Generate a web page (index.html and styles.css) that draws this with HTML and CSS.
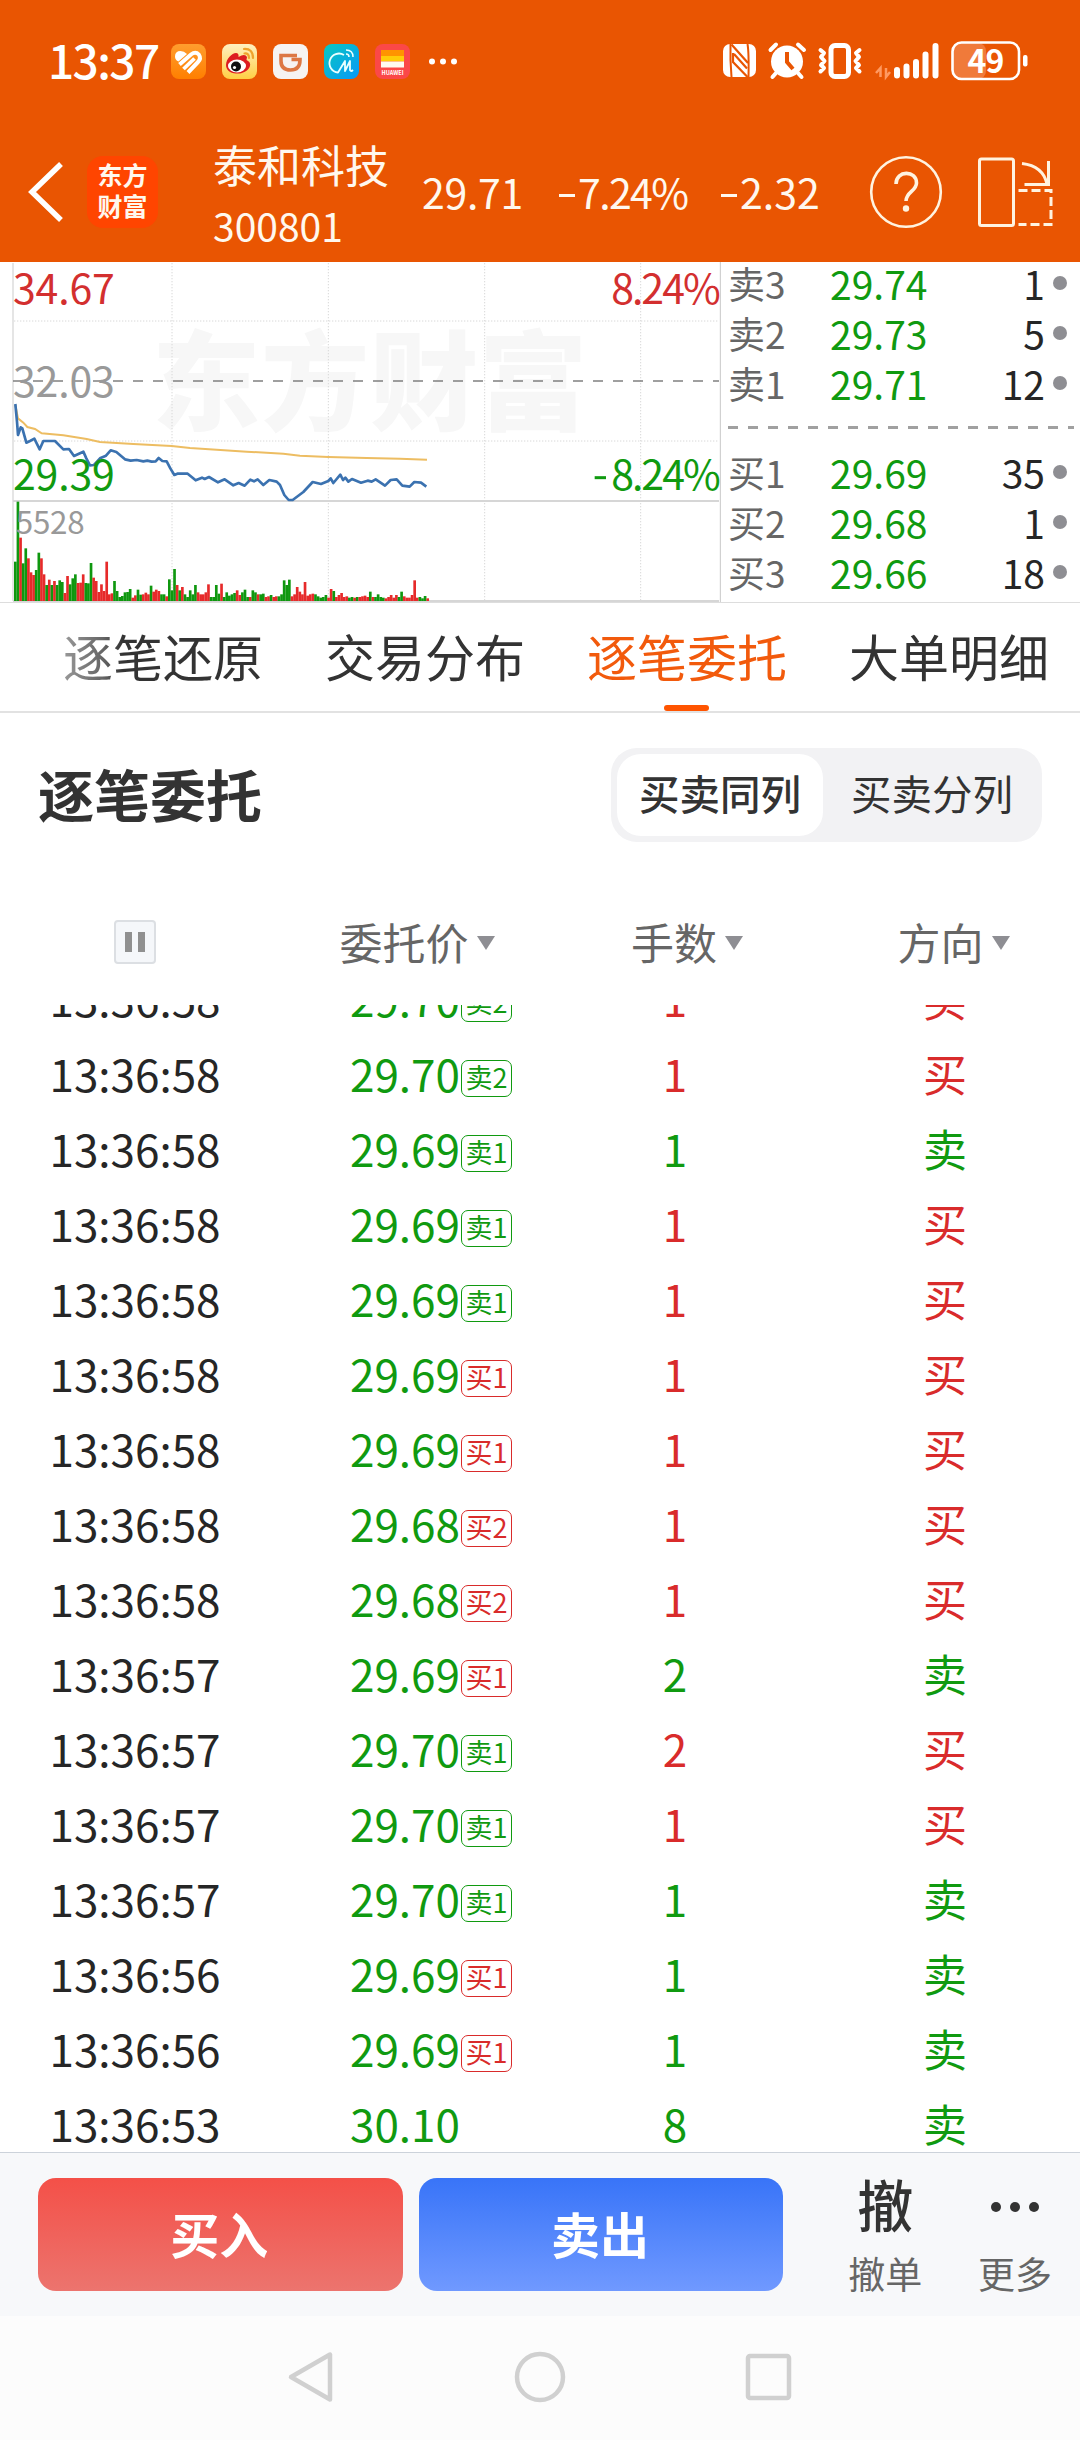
FILE: index.html
```html
<!DOCTYPE html>
<html lang="zh-CN">
<head>
    <meta charset="UTF-8">
    <meta name="viewport" content="width=device-width, initial-scale=1.0">
    <title>泰和科技 300801</title>
    <link rel="stylesheet" href="styles.css">
</head>
<body>
    <div class="status-bar">
        <span class="clock">13:37</span>
        <div class="app-icons">
            <svg viewBox="0 0 35 35">
                <defs>
                    <linearGradient id="gHealth" x1="0" y1="0" x2="0" y2="1"><stop offset="0" stop-color="#ff9d2e"/><stop offset="1" stop-color="#ff7f00"/></linearGradient>
                    <linearGradient id="gWeibo" x1="0" y1="0" x2="0" y2="1"><stop offset="0" stop-color="#fff0c0"/><stop offset="1" stop-color="#ffcf45"/></linearGradient>
                    <linearGradient id="gMidea" x1="0" y1="0" x2="1" y2="1"><stop offset="0" stop-color="#08c8c0"/><stop offset="1" stop-color="#0898f8"/></linearGradient>
                </defs>
                <rect width="35" height="35" rx="8" fill="url(#gHealth)"/>
                <path d="M4 12.500Q4 7 9.500 7Q13 7 16 10L7.500 17.500Q4 16 4 12.500Z" fill="#fff"/>
                <path d="M8.500 20.500L20 10.500Q24.500 7 27.800 10.500Q30.500 14.500 27 18L17 28.500" fill="none" stroke="#fff" stroke-width="4"/>
                <path d="M12.500 25L23.500 14.500" stroke="#fff" stroke-width="3.800"/>
            </svg>
            <svg viewBox="0 0 35 35">
                <rect width="35" height="35" rx="8" fill="url(#gWeibo)"/>
                <path d="M4 21C4 15 10 9 14 9Q17 9 16.500 13Q23 9 25 13L24.500 16Q29 18 28 22C26 28 19 30 14 29.500C8 29 4 26 4 21Z" fill="#dd1c20"/>
                <ellipse cx="15" cy="22" rx="9" ry="6.500" fill="#fff"/>
                <circle cx="14" cy="22.500" r="5" fill="#111"/>
                <circle cx="12.500" cy="23.500" r="1.600" fill="#fff"/>
                <path d="M22 5Q31 4.500 31 14M22.500 9.500Q27 9 27 14" fill="none" stroke="#efa22c" stroke-width="2.200" stroke-linecap="round"/>
            </svg>
            <svg viewBox="0 0 35 35">
                <rect width="35" height="35" rx="8" fill="#f6f3f2"/>
                <path d="M24 11.500H8V17Q8 26 17.500 26Q27 26 27 16V15.500H18.500" fill="none" stroke="#dd7744" stroke-width="3.600"/>
            </svg>
            <svg viewBox="0 0 35 35">
                <rect width="35" height="35" rx="8" fill="url(#gMidea)"/>
                <path d="M20 11A9.500 9.500 0 1 0 14 28.500L21 17L21 27L26 17L26 26Q27 28 29 26" fill="none" stroke="#e9ffff" stroke-width="1.800" stroke-linejoin="round"/>
                <path d="M22 6Q29 6 29 13M22 10Q25 10 25 13" fill="none" stroke="#e9ffff" stroke-width="1.500"/>
            </svg>
            <svg viewBox="0 0 35 35">
                <rect width="35" height="35" rx="8" fill="#fb4848"/>
                <path d="M6 6H29V12H6Z" fill="#ff9400"/>
                <path d="M6 12H29V17.500H6Z" fill="#ffcc08"/>
                <path d="M6 17.500H29V23.500H6Z" fill="#fffaf0"/>
                <text x="17.500" y="31" class="tiny">HUAWEI</text>
            </svg>
            <svg class="more" viewBox="0 0 35 35">
                <g fill="#fff"><circle cx="6" cy="17.500" r="3"/><circle cx="17" cy="17.500" r="3"/><circle cx="28" cy="17.500" r="3"/></g>
            </svg>
        </div>
        <svg class="sys-icons" width="308" height="44" viewBox="722 39 308 44">
            <!-- nfc -->
            <rect x="723" y="44" width="33" height="33" rx="7" fill="#fff"/>
            <path d="M730.500 44Q730 60 731.500 77M747.500 44Q749 52 748.500 77" fill="none" stroke="#e95502" stroke-width="2"/>
            <path d="M731.500 44.500L748 63M733 53V62L747.500 77M734 54L747 68.500" fill="none" stroke="#e95502" stroke-width="2.200"/>
            <!-- alarm -->
            <circle cx="787" cy="61.500" r="16" fill="#fff"/>
            <path d="M770.500 50L776 44.500M804 50L798 44.500M776 73L772.500 77M798 73L801.500 77" stroke="#fff" stroke-width="4" stroke-linecap="round"/>
            <path d="M787 52V62L793 69" fill="none" stroke="#e95502" stroke-width="4"/>
            <!-- vibrate -->
            <rect x="831" y="45.500" width="17.500" height="31" rx="4" fill="none" stroke="#fff" stroke-width="5"/>
            <path d="M820.500 50L824 53L821 57L824.500 61L821 65L824 68L820.500 71.500M859.500 50L856 53L859 57L855.500 61L859 65L856 68L859.500 71.500" fill="none" stroke="#fff" stroke-width="4" stroke-linecap="round" stroke-linejoin="round"/>
            <!-- signal -->
            <path d="M880.500 77V68L876 73M886 68V77L890 72" fill="none" stroke="#ff9a62" stroke-width="2.500"/>
            <path d="M897 70V75.500M906.500 66.500V75.500M916 62V75.500M925.500 54.500V75.500M935.500 46V75.500" stroke="#fff" stroke-width="6" stroke-linecap="round"/>
            <!-- battery -->
            <rect x="953" y="43" width="33" height="36" rx="8" fill="#f07a3a"/>
            <rect x="952.500" y="42.500" width="66.500" height="36.500" rx="9" fill="none" stroke="#fff" stroke-width="2.600"/>
            <rect x="1023" y="55" width="4.500" height="11.500" rx="2" fill="#fff"/>
            <text x="985.500" y="72.500" class="battery">49</text>
        </svg>
    </div>

    <header class="topbar">
        <svg class="back" width="40" height="64" viewBox="0 0 40 64"><path d="M35 6L8 32L35 58" fill="none" stroke="#fff" stroke-width="5.500" stroke-linecap="square"/></svg>
        <div class="logo">东方<br>财富</div>
        <div class="stock">
            <div class="stock-name">泰和科技</div>
            <div class="stock-code">300801</div>
        </div>
        <div class="quote">
            <span class="q-price">29.71</span>
            <span class="q-pct"><i></i>7.24%</span>
            <span class="q-diff"><i></i>2.32</span>
        </div>
        <svg class="help" width="74" height="74" viewBox="0 0 74 74">
            <circle cx="37" cy="37" r="34.800" fill="none" stroke="#fff3e0" stroke-width="2.600"/>
            <path d="M27 29C27 15 47.500 15 47.500 28C47.500 36 37 37 37 46" fill="none" stroke="#fff3e0" stroke-width="3.600"/>
            <circle cx="37" cy="53.500" r="3.200" fill="#fff3e0"/>
        </svg>
        <svg class="rotate" width="78" height="74" viewBox="0 0 78 74" fill="none" stroke="#fff3e0" stroke-width="3">
            <rect x="3.500" y="4" width="34" height="66.500" rx="2"/>
            <path d="M46 8.500Q67 11 71 29M72.500 6V29.500H48.500"/>
            <path d="M42.500 35.500H75V69.500H42.500" stroke-dasharray="9 4"/>
        </svg>
    </header>

    <section class="market">
        <svg class="chart" width="722" height="340" viewBox="0 21 2166 1020">
            <text x="456" y="502" class="watermark">东方财富</text>
            <g class="grid">
                <path d="M516 24V1035M985 24V1035M1454 24V1035M1922 24V1035M42 198H2156M42 558H2156"/>
            </g>
            <path d="M39 24V1038" stroke="#e0e0e0" stroke-width="5"/>
            <path d="M2161 21V1041" stroke="#c8c8c8" stroke-width="3"/>
            <path d="M39 738H2157M39 1038H2157" stroke="#d6d6d6" stroke-width="6"/>
            <path d="M39 378H2157" stroke="#808080" stroke-width="5" stroke-dasharray="30 30"/>
            <g id="volume"></g>
            <text x="39" y="147" class="label up">34.67</text>
            <text x="39" y="427" class="label flat">32.03</text>
            <polyline class="avg" points="46,450 54,490 70,503 82,516 105,522 125,535 190,541 260,552 300,561 400,567 515,573 570,579 650,584 740,590 850,596 900,602 985,606 1100,609 1200,611 1281,614"/>
            <polyline class="price" points="46,447 51,500 54,540 62,517 67,520 79,563 90,558 103,551 119,583 130,558 165,558 190,583 207,582 222,603 250,590 259,610 270,631 282,630 300,610 318,602 332,586 349,591 375,613 392,617 410,615 430,619 442,617 455,620 467,619 476,609 487,618 500,619 511,640 523,660 532,656 563,656 587,676 606,668 614,672 627,666 654,682 674,673 700,691 716,684 734,692 751,674 762,679 773,673 790,690 808,675 830,680 840,690 853,720 866,735 878,735 910,711 938,681 963,687 985,678 992,670 1000,684 1021,659 1029,675 1036,668 1045,680 1056,672 1083,683 1103,677 1115,680 1127,673 1155,692 1172,675 1190,673 1207,692 1229,695 1243,681 1263,683 1279,695"/>
            <text x="39" y="705" class="label down">29.39</text>
            <text x="47" y="838" class="label small flat">5528</text>
            <text x="2156" y="147" class="label end up">8.24%</text>
            <text x="2156" y="705" class="label end down">8.24%</text>
            <path d="M1784 668H1818" stroke="#109a10" stroke-width="9"/>
        </svg>
        <div class="book">
            <div class="level"><span>卖3</span><b>29.74</b><em>1</em><i></i></div>
            <div class="level"><span>卖2</span><b>29.73</b><em>5</em><i></i></div>
            <div class="level"><span>卖1</span><b>29.71</b><em>12</em><i></i></div>
            <svg class="divider" width="350" height="39" viewBox="0 0 350 39"><path d="M0 19.500H346" stroke="#a0a0a0" stroke-width="3" stroke-dasharray="10 10"/></svg>
            <div class="level"><span>买1</span><b>29.69</b><em>35</em><i></i></div>
            <div class="level"><span>买2</span><b>29.68</b><em>1</em><i></i></div>
            <div class="level"><span>买3</span><b>29.66</b><em>18</em><i></i></div>
        </div>
    </section>

    <nav class="tabs">
        <a class="tab faded">逐笔还原</a>
        <a class="tab">交易分布</a>
        <a class="tab active">逐笔委托</a>
        <a class="tab">大单明细</a>
    </nav>

    <section class="section-head">
        <h2>逐笔委托</h2>
        <div class="segment">
            <span class="selected">买卖同列</span>
            <span>买卖分列</span>
        </div>
    </section>

    <div class="table-head">
        <div><span class="pause"></span></div>
        <div><span class="sort">委托价</span></div>
        <div><span class="sort">手数</span></div>
        <div><span class="sort side">方向</span></div>
    </div>
    <div class="orders" id="orders"></div>

    <footer class="trade-bar">
        <button type="button" class="buy">买入</button>
        <button type="button" class="sell">卖出</button>
        <div class="action">
            <span class="glyph">撤</span>
            <span class="caption">撤单</span>
        </div>
        <div class="action">
            <svg width="56" height="56" viewBox="0 0 56 56" fill="#333"><circle cx="9" cy="29" r="5"/><circle cx="28" cy="29" r="5"/><circle cx="47" cy="29" r="5"/></svg>
            <span class="caption">更多</span>
        </div>
    </footer>

    <div class="nav-bar">
        <svg width="52" height="56" viewBox="0 0 52 56"><path d="M45 5.500V50.500L6 28Z"/></svg>
        <svg width="56" height="56" viewBox="0 0 56 56"><circle cx="28" cy="28" r="23"/></svg>
        <svg width="52" height="56" viewBox="0 0 52 56"><rect x="5" y="7" width="41" height="42" rx="2"/></svg>
    </div>

    <script>
        // one bar per minute, r = up, g = down
        const volume = 'g118 g298 r190 g113 g158 r128 r86 r78 g93 g145 r128 r80 g48 r64 g48 r60 g48 g62 g57 r24 r75 g50 g68 g80 r54 r55 r80 g54 g53 g114 r70 r60 r27 r50 r30 r118 r20 r23 g60 g30 g12 g15 g26 g27 g36 r10 r17 g34 g19 r20 r25 r20 g46 r28 r34 r30 g20 g20 r14 g65 g32 g96 r48 g32 r42 g20 g12 g32 g20 g48 r26 r20 r20 r26 r50 g12 g12 g48 g22 r52 g12 g26 g16 g20 g24 r32 r18 g26 g34 g12 r12 g32 g26 r20 g20 g22 r12 r14 g18 r12 r14 g14 g20 g62 g48 g64 r14 r20 r42 r28 r20 r57 r16 r20 r22 g20 g14 g10 g12 g18 r10 r36 g30 r12 r18 r24 r12 r14 g10 g12 r10 g12 r12 r14 r16 r12 g28 r12 g12 g20 g12 g10 r8 r12 r18 r10 r18 g12 g28 r14 r10 r10 r18 r62 r10 g12 g8 g15 r8'.split(' ');

        document.getElementById('volume').innerHTML = volume.map((bar, i) => {
            const height = Number(bar.slice(1));
            const fill = bar[0] === 'r' ? '#e62a2a' : '#0f970f';
            return `<rect x="${(42 + i * 7.83).toFixed(1)}" y="${1038 - height}" width="8" height="${height}" fill="${fill}"/>`;
        }).join('');

        // time, price, queue tag, lots, direction
        const orders = [
            ['13:36:58', '29.70', '卖2', 1, '买'],
            ['13:36:58', '29.70', '卖2', 1, '买'],
            ['13:36:58', '29.69', '卖1', 1, '卖'],
            ['13:36:58', '29.69', '卖1', 1, '买'],
            ['13:36:58', '29.69', '卖1', 1, '买'],
            ['13:36:58', '29.69', '买1', 1, '买'],
            ['13:36:58', '29.69', '买1', 1, '买'],
            ['13:36:58', '29.68', '买2', 1, '买'],
            ['13:36:58', '29.68', '买2', 1, '买'],
            ['13:36:57', '29.69', '买1', 2, '卖'],
            ['13:36:57', '29.70', '卖1', 2, '买'],
            ['13:36:57', '29.70', '卖1', 1, '买'],
            ['13:36:57', '29.70', '卖1', 1, '卖'],
            ['13:36:56', '29.69', '买1', 1, '卖'],
            ['13:36:56', '29.69', '买1', 1, '卖'],
            ['13:36:53', '30.10', '', 8, '卖']
        ];

        const colorOf = side => side[0] === '买' ? 'up' : 'down';

        document.getElementById('orders').innerHTML = orders.map(([time, price, tag, lots, side]) => `
            <div class="order">
                <div>${time}</div>
                <div class="down">${price}${tag ? `<span class="tag ${colorOf(tag)}">${tag}</span>` : ''}</div>
                <div class="${colorOf(side)}">${lots}</div>
                <div class="${colorOf(side)}">${side}</div>
            </div>
        `).join('');
    </script>
</body>
</html>
```
FILE: styles.css
```css
* {
    box-sizing: border-box;
}

body {
    margin: 0;
    width: 1080px;
    height: 2440px;
    display: flex;
    flex-direction: column;
    overflow: hidden;
    background-color: #fff;
    color: #262626;
    font-family: "Noto Sans CJK SC", "Noto Sans", sans-serif;
}

.up {
    color: #d92b2b;
    fill: #d32f2f;
}

.down {
    color: #109a10;
    fill: #109a10;
}

.flat {
    fill: #999;
}

/* status bar */
.status-bar {
    display: flex;
    align-items: center;
    height: 122px;
    padding: 0 50px 0 48px;
    background-color: #e95502;
    color: #fff;
}

.clock {
    width: 123px;
    font-size: 46px;
    font-weight: 500;
    line-height: 60px;
    letter-spacing: -1.6px;
    margin-top: -4px;
}

.app-icons {
    display: flex;
    gap: 16px;
}

.app-icons svg {
    width: 35px;
    height: 35px;
}

.tiny {
    font-size: 5.5px;
    font-weight: bold;
    fill: #fff;
    text-anchor: middle;
}

.battery {
    font-size: 32px;
    font-weight: bold;
    fill: #fff;
    text-anchor: middle;
    letter-spacing: -1px;
}

.sys-icons {
    margin-left: auto;
}

/* top bar */
.topbar {
    display: flex;
    align-items: center;
    height: 140px;
    padding: 0 22px 0 24px;
    background-color: #e95502;
    color: #fff8ee;
}

.logo {
    width: 71px;
    height: 72px;
    margin-left: 23px;
    padding-top: 3px;
    border-radius: 16px;
    background-color: #ff4500;
    font-size: 25px;
    font-weight: bold;
    line-height: 31px;
    text-align: center;
}

.stock {
    width: 190px;
    margin-left: 55px;
    padding-top: 4px;
}

.stock-name {
    font-size: 44px;
    line-height: 62px;
    white-space: nowrap;
}

.stock-code {
    font-size: 39px;
    line-height: 60px;
}

.quote {
    display: flex;
    width: 448px;
    font-size: 41px;
    line-height: 60px;
    margin: -3px 0 0 19px;
}

.quote i {
    display: inline-block;
    width: 16px;
    height: 3px;
    margin: 0 3px 12px 0;
    background-color: #fff8ee;
    vertical-align: baseline;
}

.q-price {
    width: 137px;
    letter-spacing: -0.3px;
}

.q-pct {
    width: 162px;
    letter-spacing: -1.6px;
}

.help {
    margin-left: -1px;
}

.rotate {
    margin-left: 33px;
    flex: none;
}

/* chart and order book */
.market {
    display: flex;
    height: 341px;
    border-bottom: 1px solid #ddd;
}

.chart {
    flex: none;
}

.watermark {
    font-size: 325px;
    font-weight: 900;
    fill: #f7f7f7;
    letter-spacing: 2px;
}

.grid path {
    fill: none;
    stroke: #d8d8d8;
    stroke-width: 3;
    stroke-dasharray: 4 5;
}

.label {
    font-size: 123px;
    letter-spacing: -0.5px;
}

.label.small {
    font-size: 94px;
}

.label.end {
    text-anchor: end;
    letter-spacing: -6px;
}

.avg {
    fill: none;
    stroke: #edbd62;
    stroke-width: 6;
}

.price {
    fill: none;
    stroke: #3b72b0;
    stroke-width: 8;
    stroke-linejoin: round;
}

.book {
    flex: 1;
    padding: 0 12px 0 6px;
    margin-top: -4px;
}

.level {
    display: grid;
    grid-template-columns: 102px 120px 95px 1fr;
    height: 50px;
    line-height: 50px;
    font-size: 39px;
}

.level span {
    color: #666;
    font-size: 37px;
}

.level b {
    color: #109a10;
    font-weight: normal;
}

.level em {
    font-style: normal;
    text-align: right;
}

.level i {
    width: 14px;
    height: 14px;
    margin: 18px 0 0 8px;
    border-radius: 50%;
    background-color: #8e8e93;
}

.divider {
    display: block;
}

/* tabs */
.tabs {
    display: flex;
    gap: 62px;
    height: 110px;
    padding-left: 63px;
    border-bottom: 2px solid #e2e2e2;
}

.tab {
    position: relative;
    flex: none;
    font-size: 50px;
    line-height: 104px;
    color: #333;
}

.tab.faded {
    background: linear-gradient(to right, #999 0, #666 40px, #333 60px);
    background-clip: text;
    -webkit-background-clip: text;
    color: transparent;
}

.tab.active {
    color: #f25a0c;
}

.tab.active::after {
    content: "";
    position: absolute;
    left: 77px;
    bottom: 0;
    width: 45px;
    height: 6px;
    border-radius: 3px;
    background-color: #ff5400;
}

/* section title */
.section-head {
    display: flex;
    justify-content: space-between;
    align-items: center;
    height: 163px;
    padding: 0 38px 0 38px;
}

.section-head h2 {
    margin: -4px 0 0;
    font-size: 56px;
    font-weight: bold;
    color: #333;
}

.segment {
    display: flex;
    width: 431px;
    height: 94px;
    padding: 6px;
    border-radius: 26px;
    background-color: #f2f2f4;
}

.segment span {
    width: 206px;
    border-radius: 24px;
    font-size: 40.5px;
    line-height: 78px;
    text-align: center;
    color: #333;
}

.segment span + span {
    width: 213px;
    padding-left: 5px;
}

.segment .selected {
    background-color: #fff;
    font-weight: 500;
}

/* orders */
.table-head,
.order {
    display: grid;
    grid-template-columns: repeat(4, 270px);
    text-align: center;
}

.table-head {
    height: 129px;
    padding-top: 35px;
    font-size: 43px;
    line-height: 60px;
    color: #666;
}

.pause {
    display: block;
    width: 42px;
    height: 44px;
    margin: 9px auto 0;
    border: 2px solid #dcdfe3;
    border-radius: 4px;
    background: linear-gradient(#909090, #909090) 9px 10px / 7px 20px no-repeat,
        linear-gradient(#909090, #909090) 22px 10px / 7px 20px no-repeat #f5f7fa;
}

.sort {
    margin-left: -2px;
}

.sort.side {
    margin-left: -9px;
}

.sort::after {
    content: "";
    display: inline-block;
    margin: 0 -26px 10px 8px;
    border: 9.500px solid transparent;
    border-top: 14px solid #8e8e93;
    border-bottom: 0;
}

.orders {
    height: 1147px;
    overflow: hidden;
}

.order {
    height: 75px;
    font-size: 44px;
    line-height: 75px;
}

.order:first-child {
    margin-top: -44px;
}

.tag {
    display: inline-block;
    width: 51px;
    height: 37px;
    margin: 0 -52px 0 1px;
    border: 1px solid;
    border-radius: 7px;
    font-size: 27px;
    line-height: 32px;
    vertical-align: 4px;
}

/* bottom bar */
.trade-bar {
    display: flex;
    height: 164px;
    padding: 25px 0 0 38px;
    border-top: 1px solid #ccd2da;
    background-color: #f7f8fa;
}

.trade-bar button {
    width: 365px;
    height: 113px;
    margin-right: 16px;
    padding: 0 2px 5px 0;
    border: none;
    border-radius: 18px;
    color: #fff;
    font-family: inherit;
    font-size: 49px;
    font-weight: bold;
}

.buy {
    background: linear-gradient(#f45048, #ec746e);
}

.sell {
    background: linear-gradient(#3874f8, #7099ff);
}

.action {
    display: flex;
    flex-direction: column;
    align-items: center;
    width: 130px;
    margin-left: 21px;
}

.action + .action {
    margin-left: 0;
}

.glyph {
    font-size: 56px;
    font-weight: 500;
    line-height: 56px;
    color: #333;
    margin-top: -3px;
    height: 59px;
}

.action svg {
    height: 56px;
}

.caption {
    margin-top: 14px;
    font-size: 37px;
    line-height: 50px;
    color: #666;
}

.nav-bar {
    display: flex;
    justify-content: center;
    gap: 175px;
    flex: 1;
    padding-top: 33px;
    background-color: #fcfcfc;
}

.nav-bar svg {
    fill: none;
    stroke: #d0d0d0;
    stroke-width: 4.500;
    stroke-linejoin: round;
}
```
